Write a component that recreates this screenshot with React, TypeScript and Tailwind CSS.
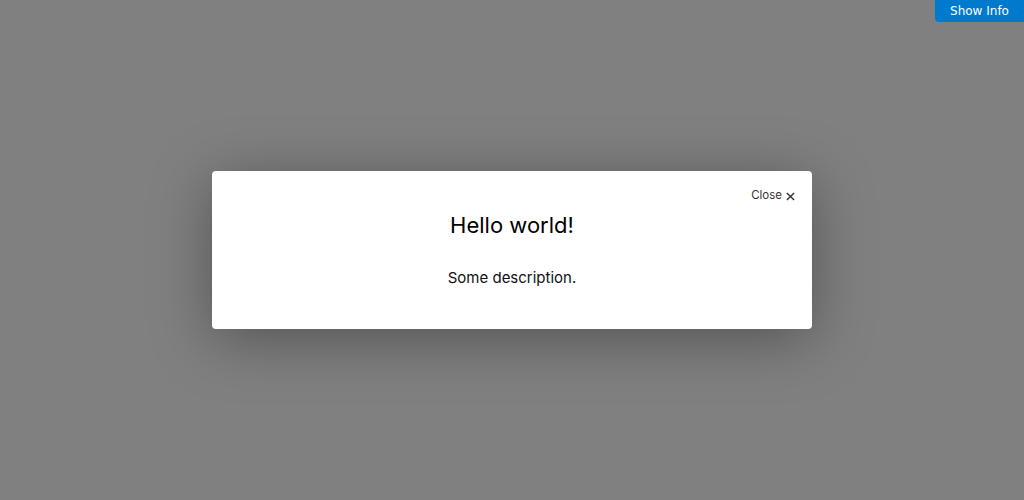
export default function App() {
  return (
    <div className="relative h-[500px] w-[1024px] overflow-hidden bg-[#808080] font-['Inter',sans-serif]">
      <button className="absolute right-0 top-0 h-[22px] w-[89px] rounded-bl-[4px] bg-[#007acc] font-['DejaVu_Sans',sans-serif] text-[12px] text-white">
        Show Info
      </button>
      <div className="flex h-full items-center justify-center">
        <div className="relative h-[158px] w-[600px] rounded-[4px] bg-white shadow-[0_10px_60px_rgba(0,0,0,0.35)]">
          <button className="absolute right-[17px] top-[16px] flex items-center gap-[4px] text-[11.5px] text-[#333]">
            Close
            <svg width="9" height="9" viewBox="0 0 10 10" className="mt-[1px]">
              <path d="M1 1L9 9M9 1L1 9" stroke="#333" strokeWidth="1.6" />
            </svg>
          </button>
          <div className="flex flex-col items-center pt-[40px]">
            <h1 className="text-[22px] leading-[28px] text-black">Hello world!</h1>
            <p className="mt-[29px] text-[15px] leading-[20px] text-[#111]">Some description.</p>
          </div>
        </div>
      </div>
    </div>
  )
}
